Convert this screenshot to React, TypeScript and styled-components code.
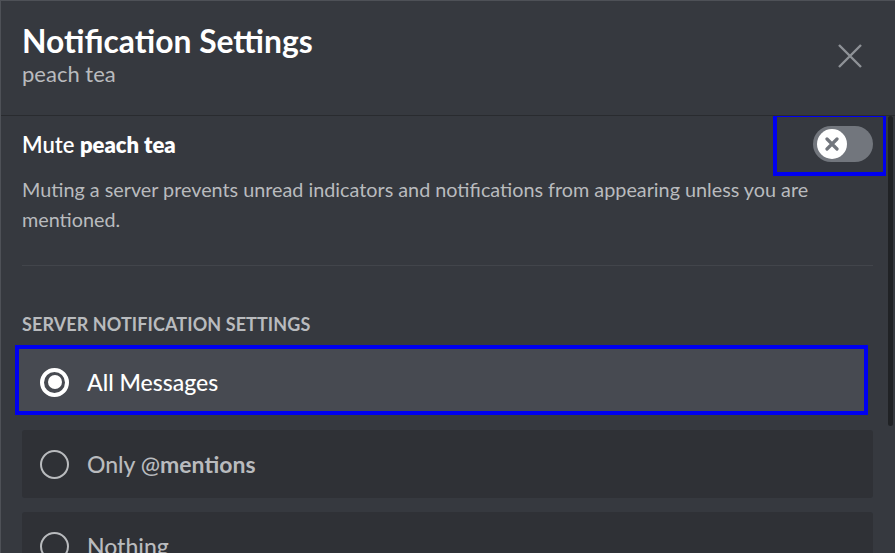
import React from "react";
import styled, { createGlobalStyle } from "styled-components";

const Global = createGlobalStyle`
  html, body { margin: 0; padding: 0; background: #36393f; }
  body { font-family: Lato, "Noto Sans", sans-serif; -webkit-font-smoothing: antialiased; }
  #root { height: 100vh; }
  * { box-sizing: border-box; }
`;

const Modal = styled.div`
  height: 553px;
  width: 895px;
  display: flex;
  flex-direction: column;
  background: #36393f;
  border-top: 1px solid #4e5157;
  border-left: 1px solid #4e5157;
  overflow: hidden;
`;

const Header = styled.header`
  display: flex;
  justify-content: space-between;
  align-items: flex-start;
  padding: 22px 33px 28px 21px;
  border-bottom: 1px solid #292b2f;
  flex-shrink: 0;
`;

const TitleBlock = styled.div`
  display: flex;
  flex-direction: column;
  gap: 1px;
`;

const Title = styled.h1`
  margin: 0;
  font-size: 31.8px;
  line-height: 37px;
  font-weight: 700;
  color: #ffffff;
`;

const Subtitle = styled.div`
  font-size: 22px;
  line-height: 26px;
  color: #b9bbbe;
`;

const CloseButton = styled.button`
  border: 0;
  background: transparent;
  padding: 0;
  margin-top: 21px;
  width: 24px;
  height: 24px;
  display: flex;
  cursor: pointer;
`;

const Body = styled.div`
  flex: 1;
  min-height: 0;
  display: flex;
`;

const Content = styled.div`
  flex: 1;
  min-width: 0;
  overflow: hidden;
  padding: 10px 13px 0 21px;
`;

const ScrollRail = styled.div`
  width: 9px;
  flex-shrink: 0;
  padding: 0 2px;
`;

const ScrollThumb = styled.div`
  width: 5px;
  height: 310px;
  border-radius: 3px;
  background: #202225;
`;

const MuteRow = styled.div`
  display: flex;
  align-items: center;
  justify-content: space-between;
  height: 36px;
`;

const MuteLabel = styled.div`
  font-size: 22px;
  font-weight: 600;
  color: #ffffff;
  strong { font-weight: 800; }
`;

const ToggleWrap = styled.div`
  position: relative;
  width: 60px;
  height: 36px;
`;

const Track = styled.div`
  width: 60px;
  height: 36px;
  border-radius: 18px;
  background: #72767d;
  display: flex;
  align-items: center;
  padding-left: 4px;
`;

const Knob = styled.div`
  width: 30px;
  height: 30px;
  border-radius: 50%;
  background: #ffffff;
  display: flex;
  align-items: center;
  justify-content: center;
`;

const Annotation = styled.div<{ $t: number; $r: number; $b: number; $l: number }>`
  position: absolute;
  top: ${(p) => p.$t}px;
  right: ${(p) => p.$r}px;
  bottom: ${(p) => p.$b}px;
  left: ${(p) => p.$l}px;
  border: 4px solid #0000f0;
  pointer-events: none;
`;

const Description = styled.p`
  margin: 12px 0 0;
  font-size: 19.8px;
  line-height: 30px;
  color: #b9bbbe;
`;

const Divider = styled.hr`
  margin: 31px 0 0;
  border: 0;
  height: 1px;
  background: #42454b;
`;

const SectionTitle = styled.h2`
  margin: 48px 0 0;
  font-size: 18px;
  line-height: 20px;
  font-weight: 700;
  text-transform: uppercase;
  color: #b9bbbe;
  letter-spacing: 0.005em;
`;

const Options = styled.div`
  margin-top: 14px;
  display: flex;
  flex-direction: column;
  gap: 14px;
`;

const Option = styled.div<{ $selected?: boolean }>`
  position: relative;
  height: 68px;
  display: flex;
  align-items: center;
  gap: 18px;
  padding-left: 18px;
  border-radius: 3px;
  background: ${(p) => (p.$selected ? "transparent" : "#2f3136")};
  color: ${(p) => (p.$selected ? "#ffffff" : "#b9bbbe")};
  font-size: 23px;
  font-weight: 500;
  strong { font-weight: 700; }
`;

const SelectedFill = styled.div`
  position: absolute;
  top: -3px;
  left: -7px;
  right: 5px;
  bottom: 1px;
  background: #474a51;
  border: 4px solid #0000f0;
`;

const Radio = styled.span<{ $checked?: boolean }>`
  position: relative;
  width: 29px;
  height: 29px;
  border-radius: 50%;
  border: ${(p) => (p.$checked ? "4px solid #ffffff" : "2.5px solid #b9bbbe")};
  display: flex;
  align-items: center;
  justify-content: center;
  flex-shrink: 0;
  &::after {
    content: "";
    display: ${(p) => (p.$checked ? "block" : "none")};
    width: 14px;
    height: 14px;
    border-radius: 50%;
    background: #ffffff;
  }
`;

const OptionText = styled.span`
  position: relative;
`;

export default function App() {
  return (
    <>
      <Global />
      <Modal>
        <Header>
          <TitleBlock>
            <Title>Notification Settings</Title>
            <Subtitle>peach tea</Subtitle>
          </TitleBlock>
          <CloseButton aria-label="Close">
            <svg width="24" height="24" viewBox="0 0 24 24">
              <path d="M1 1 L23 23 M23 1 L1 23" stroke="#8e9297" strokeWidth="2.4" fill="none" />
            </svg>
          </CloseButton>
        </Header>
        <Body>
          <Content>
            <MuteRow>
              <MuteLabel>
                Mute <strong>peach tea</strong>
              </MuteLabel>
              <ToggleWrap>
                <Track>
                  <Knob>
                    <svg width="14" height="14" viewBox="0 0 14 14">
                      <path d="M2 2 L12 12 M12 2 L2 12" stroke="#72767d" strokeWidth="3.2" strokeLinecap="round" fill="none" />
                    </svg>
                  </Knob>
                </Track>
                <Annotation $t={-13} $r={-14} $b={-14} $l={-40} />
              </ToggleWrap>
            </MuteRow>
            <Description>
              Muting a server prevents unread indicators and notifications from appearing unless you are mentioned.
            </Description>
            <Divider />
            <SectionTitle>Server Notification Settings</SectionTitle>
            <Options>
              <Option $selected>
                <SelectedFill />
                <Radio $checked />
                <OptionText>All Messages</OptionText>
              </Option>
              <Option>
                <Radio />
                <OptionText>
                  Only @<strong>mentions</strong>
                </OptionText>
              </Option>
              <Option>
                <Radio />
                <OptionText>Nothing</OptionText>
              </Option>
            </Options>
          </Content>
          <ScrollRail>
            <ScrollThumb />
          </ScrollRail>
        </Body>
      </Modal>
    </>
  );
}
